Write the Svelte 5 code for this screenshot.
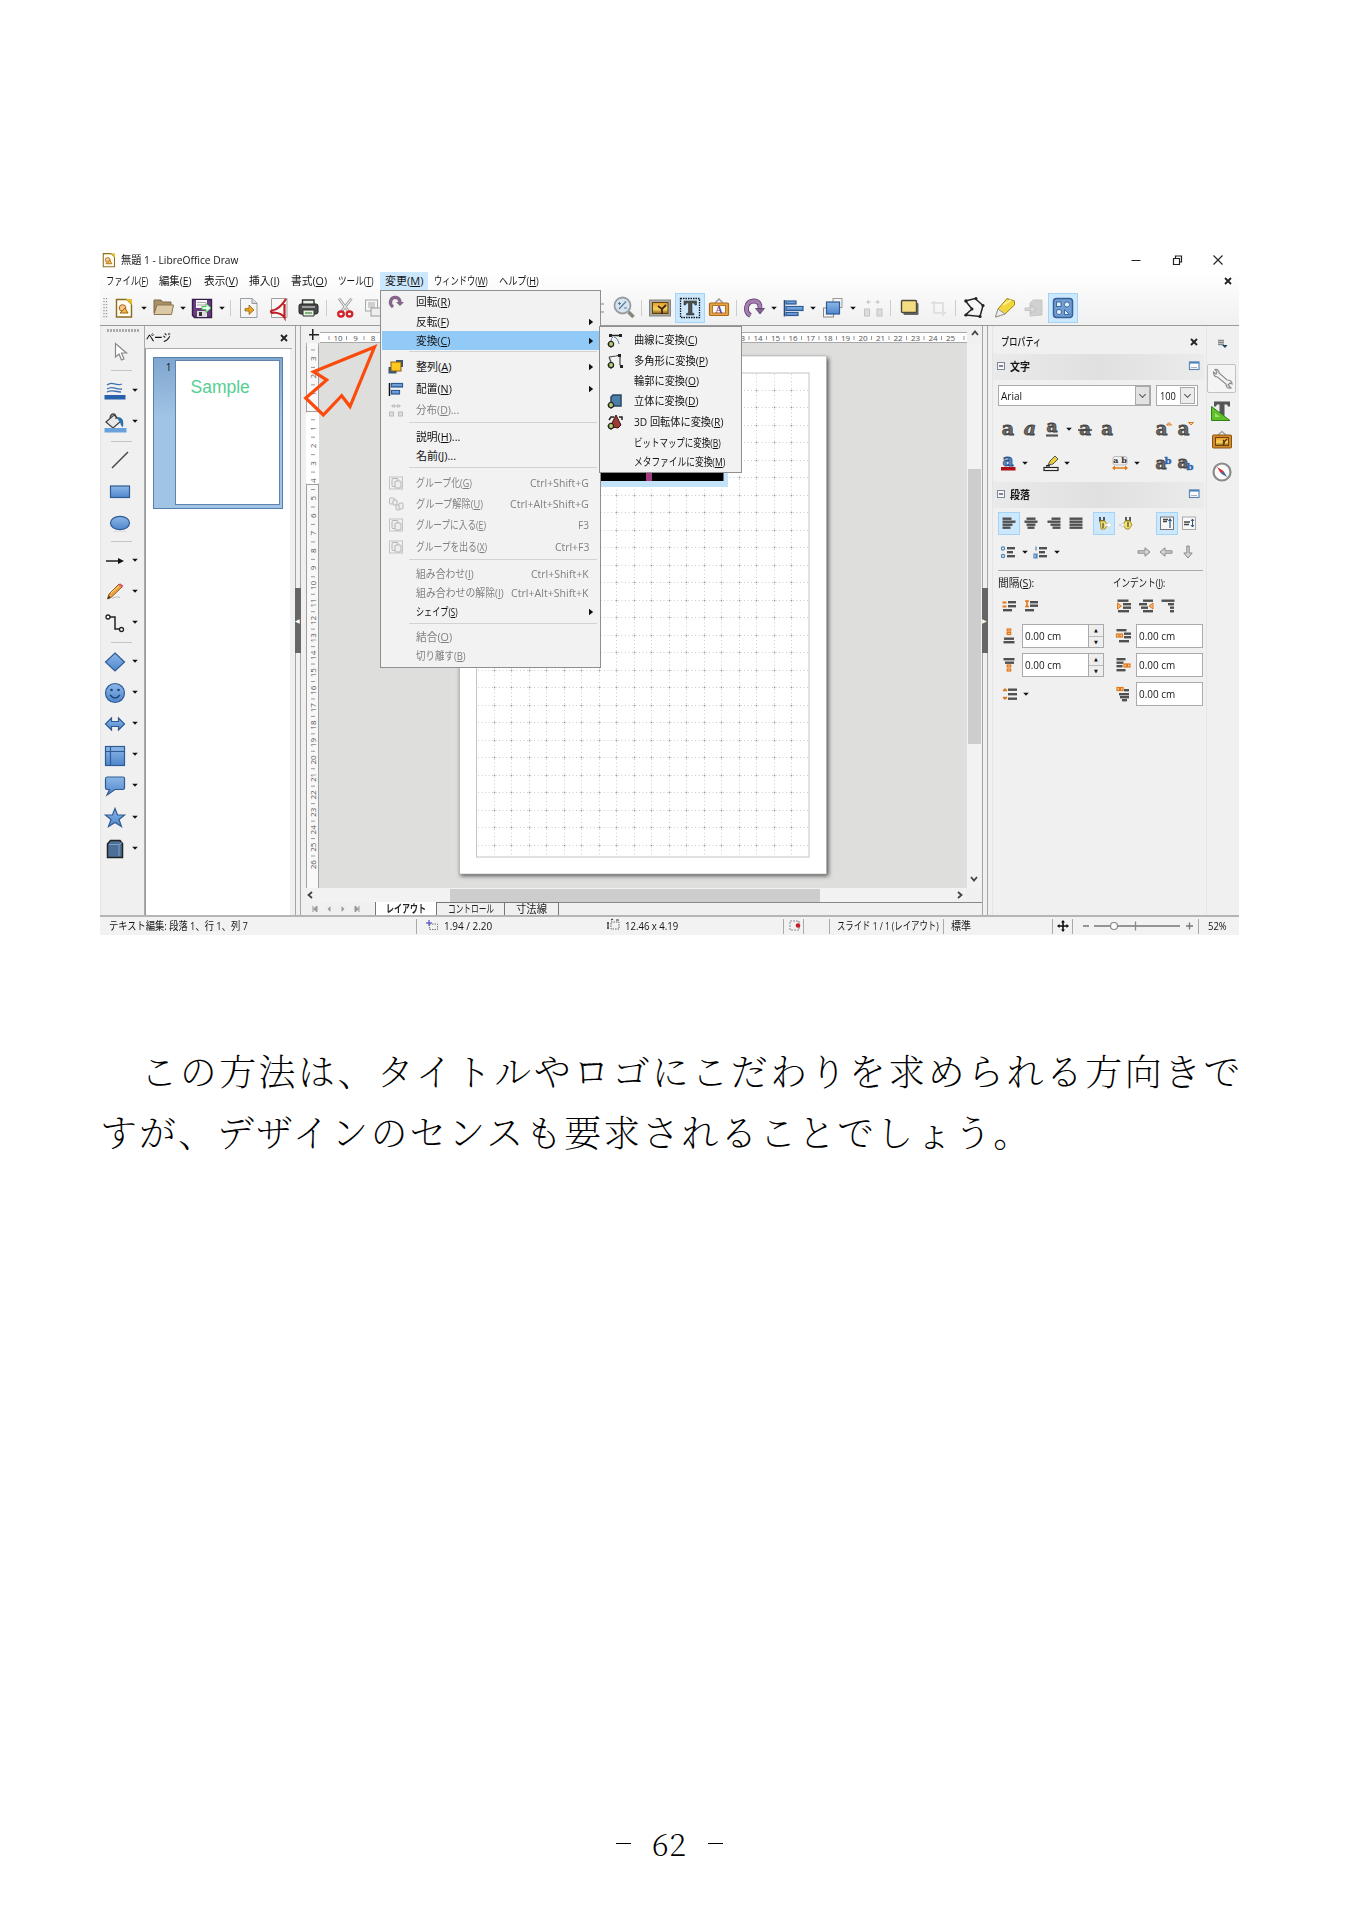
<script>
  // Turns centre positions along an axis into gaps between consecutive items.
  function flow(items, start) {
    let end = start;
    return items.map(([name, c, w, extra]) => {
      const size = w ?? (name === 'dd' ? 8 : name === 'sep' ? 2 : 16);
      const gap = c - size / 2 - end;
      end = c + size / 2;
      return { name, gap, size, extra };
    });
  }

  function fit(node, w) {
    const natural = node.offsetWidth;
    if (natural && w) node.style.transform = `scaleX(${w / natural})`;
  }

  function parts(s) {
    const m = /^(.*\()([A-Z])(\).*)$/.exec(s);
    return m ? m.slice(1) : [s, '', ''];
  }

  const B = 'fill="url(#blue)" stroke="#2f5b94" stroke-width="1.2"';
  const bars = (list, color = '#505050') =>
    list.map(([x, y, w]) => `<rect x="${x}" y="${y}" width="${w}" height="2.4" fill="${color}"/>`).join('');
  const orange = (x, y, w = 3, h = 3) =>
    `<rect x="${x}" y="${y}" width="${w}" height="${h}" fill="#fbd3a8" stroke="#e07818" stroke-width="1.2"/>`;
  const glyph = (s, extra = '', size = 19) =>
    `<text y="5.5" text-anchor="middle" font-family="DejaVu Serif, serif" font-weight="bold" font-size="${size}" fill="#6a6a6a" stroke="#3f3f3f" stroke-width=".8" ${extra}>${s}</text>`;
  const groupIcon = '<rect x="-6.5" y="-6" width="13" height="12" fill="none" stroke="#c4c4c4"/><rect x="-4" y="-4.500" width="6" height="8" rx="1" fill="#eee" stroke="#b4b4b4"/><rect x="-1" y="-2" width="6" height="7" rx="1" fill="#eee" stroke="#b4b4b4"/>';
  const node = '<circle cx="-4" cy="4" r="2.600" fill="#b7d46a" stroke="#222" stroke-width="1.200"/><path d="M-7.500 4h2M-4 6.500v1.500" stroke="#222"/>';

  const icons = {
    dd: '<path d="M-2.800-1.300h5.600L0 1.800z" fill="#111"/>',
    grip: '<path d="M0-10V10M2.500-10V10" stroke="#999" stroke-width="1.3" stroke-dasharray="1.300 1.700"/>',
    draw: '<path d="M-7.500-8.500H3l4.500 4.500V9h-15z" fill="#fffdf0" stroke="#8c6c22" stroke-width="1.4"/><path d="M2-9h6v6z" fill="#e6bd2a"/><circle cx="-1.500" cy="0" r="3.300" fill="#f6c88a" stroke="#b05c1c"/><path d="M-4 5l5-5 3 5z" fill="#f2b83a" stroke="#a4651a"/>',
    open: '<path d="M-9-8h7l1.500 2H8v11H-9z" fill="#a98f66" stroke="#7f6846"/><path d="M-6-3H10.500L8.500 6.500H-9z" fill="#dccaa6" stroke="#8d744d"/>',
    save: '<path d="M-9.500-8.500h19v18h-17l-2-2z" fill="#693c80" stroke="#351d4e" stroke-width="1.4"/><path d="M-6-8H5v8H-6z" fill="#f7f7f7"/><path d="M-5-5.500h9M-5-3h9" stroke="#aaa"/><path d="M-5 3H5v6H-5z" fill="#ddd"/><path d="M-3 4h3v4h-3z" fill="#333"/><path d="M0-1.500h4v-3L9 0 4 4.500v-3H0z" fill="#e1ffe1" stroke="#54bd62"/>',
    export: '<path d="M-8.500-9.500H3l5 4.500V9.500h-16.500z" fill="#f4f6f7" stroke="#9a9d9e"/><path d="M3-9.500v5h5" fill="#ddd" stroke="#999"/><path d="M-4 .5h4v-3.500L5 2 0 6.500V3h-4z" fill="#efa51d" stroke="#855a16" stroke-width=".7"/>',
    pdf: '<path d="M-7.500-9.500H8V9.500H-7.500z" fill="#faf7f6" stroke="#a0a0a0"/><path d="M7-9C2-1-2 2-7 2.500c-2 .5-1 3 2 2C0 5 4 7 5.500 9.500V-4" fill="none" stroke="#c21d25" stroke-width="2.200"/>',
    print: '<path d="M-5.500-8H6v6H-5.500z" fill="#e6eee6" stroke="#333" stroke-width="1.400"/><rect x="-9" y="-4" width="19" height="10" rx="2" fill="#4a4a4a" stroke="#222"/><path d="M-6-1H7" stroke="#bbb" stroke-width="1.500"/><path d="M-5 2H6v6H-5z" fill="#e4f4df" stroke="#333"/><path d="M-3 5h7" stroke="#80b277" stroke-width="2"/>',
    cut: '<path d="M-6-9.500L4 4M6.500-9.500L-4 4" stroke="#999" stroke-width="2.800"/><path d="M-6-9.500L4 4M6.500-9.500L-4 4" stroke="#eee" stroke-width="1.200"/><ellipse cx="-4" cy="6" rx="2.800" ry="2.500" fill="none" stroke="#d02329" stroke-width="2.300"/><ellipse cx="4.500" cy="6" rx="2.800" ry="2.500" fill="none" stroke="#d02329" stroke-width="2.300"/>',
    copy: '<rect x="-6.500" y="-8" width="12" height="11" fill="#f5f5f5" stroke="#a8a8a8"/><path d="M-4-5h7M-4-3h7M-4-1h7" stroke="#aaa"/><rect x="-1" y="0" width="12" height="8" fill="#eee" stroke="#999"/>',
    frag: '<path d="M-1-4h3M-1 4h3" stroke="#aaa" stroke-width="1.400"/>',
    zoom: '<circle cx="-1.500" cy="-2.500" r="8" fill="#d6e4f2" stroke="#969ca0" stroke-width="1.800"/><path d="M4.500 4l5 5" stroke="#88847e" stroke-width="3.500"/><path d="M-5 1L2-6.500M-6-4.500h3M-4.500-6v3M0 0h3" stroke="#58789a" stroke-width="1.100"/>',
    image: '<rect x="-10.500" y="-8" width="21" height="16" fill="#a9a9a0" stroke="#858585"/><rect x="-7.500" y="-5.500" width="15.500" height="11" fill="url(#gold)" stroke="#5c4419"/><path d="M2 6V1L-2-2M2 1l4-4" stroke="#412a10" stroke-width="1.800" fill="none"/>',
    textbox: '<rect x="-9.500" y="-9.500" width="19" height="19" fill="none" stroke="#111" stroke-width="1.300" stroke-dasharray="1.500 1"/><path d="M-6-7H6.500v4H5l-1-2H2V5l2 .5V7h-7.500V5.500L-1.500 5V-5h-2l-1 2H-6z" fill="#505050" stroke="#333" stroke-width=".6"/>',
    fontwork: '<path d="M-4-5l4-4 4 4" fill="none" stroke="#999" stroke-width="1.500"/><rect x="-9.500" y="-5" width="19" height="12.500" rx="1" fill="#e5a546" stroke="#ae6b19" stroke-width="1.200"/><rect x="-6.500" y="-2.500" width="13" height="7.500" fill="#fbfbfb" stroke="#b97522"/><text y="4.500" font-size="9.500" font-weight="bold" text-anchor="middle" font-family="Liberation Serif" fill="#633e8e">A</text>',
    rotate: '<path d="M-3.500 7.500C-10 4-8.500-6.500-.5-7 5-7.200 6.500-3 6 1" fill="none" stroke="#533b68" stroke-width="4.800"/><path d="M-3.500 7.500C-10 4-8.500-6.500-.5-7 5-7.200 6.500-3 6 1" fill="none" stroke="#a77cb1" stroke-width="3.300"/><path d="M1.500.5h9L6 6z" fill="#86608e" stroke="#4a325d" stroke-width=".7"/>',
    align: `<path d="M-8.500-8V8.500" stroke="#234c80" stroke-width="1.600"/><rect x="-7" y="-7" width="10" height="3" ${B}/><rect x="-7" y="-1.500" width="17" height="4" ${B}/><rect x="-7" y="4.500" width="12" height="3" ${B}/>`,
    arrange: `<rect x="0" y="-9.500" width="9" height="9" fill="#f5f5f5" stroke="#999"/><rect x="-9.500" y="0" width="10" height="9" fill="#f5f5f5" stroke="#888"/><rect x="-6.500" y="-6" width="13" height="12" ${B}/>`,
    distribute: '<path d="M-6-6h4M2-6h4" stroke="#ccc"/><path d="M-7-6l3-2.500v5zM7-6l-3-2.500v5z" fill="#ccc"/><rect x="-8.500" y="1" width="5" height="7" fill="#ddd" stroke="#c4c4c4"/><rect x="4" y="1" width="5" height="7" fill="#ddd" stroke="#c4c4c4"/>',
    shadow: '<rect x="-5.500" y="-5" width="15" height="12" rx="1" fill="#666"/><rect x="-7.500" y="-7.500" width="15" height="12" rx="1" fill="#f3dc82" stroke="#4c4a38" stroke-width="1.400"/>',
    crop: '<path d="M-7-5H5V8M-4-7V5H8" stroke="#e0e0e0" stroke-width="2" fill="none"/>',
    points: '<path d="M-8.500-7L1-9.500 9-2.500 6 8.500-8.500 7-2 1z" fill="none" stroke="#222" stroke-width="1.500"/><g fill="#222"><circle cx="-8" cy="-7" r="1.700"/><circle cx="2" cy="-9.500" r="1.500"/><circle cx="9" cy="-2.500" r="1.600"/><circle cx="6" cy="8.500" r="1.600"/><circle cx="-8" cy="7" r="1.600"/><circle cx="-2" cy="1" r="1.500"/></g>',
    glue: '<path d="M-9.500 9L-7 1 2-9.500 9.500-7v4L0 6z" fill="#f1d73c" stroke="#9b851a"/><path d="M-9.500 9L-7 1l7 5z" fill="#eee" stroke="#999"/><path d="M-2-3l8-5" stroke="#fff1a0" stroke-width="1.500"/>',
    ext: '<path d="M-5-5l3-3h9v15l-12 1z" fill="#d0d0d0" stroke="#c8c8c8"/><path d="M-10 0h6v-3l5 4.500-5 4v-3h-6z" fill="#dadada" stroke="#bbb" stroke-width=".8"/>',
    shapes: '<rect x="-9.500" y="-9.500" width="19" height="19" rx="3" fill="#6f9ed2" stroke="#365f96" stroke-width="1.500"/><g fill="#e1f0ff" stroke="#345f95" stroke-width=".9"><rect x="-6.500" y="-6" width="4.500" height="4.500"/><circle cx="4" cy="-3.500" r="2.600"/><circle cx="-4" cy="4" r="2.600"/><path d="M1.500 1.500v5h5z"/></g>',
    cursor: '<path d="M-4.500-8.500V5l3.500-3 2.500 6 2.500-1-2.500-6h5z" fill="#fff" stroke="#888" stroke-width="1.200"/>',
    linecolor: '<path d="M-8-6c6-5 8 2 15-1M-8-2c6-4 8 1 15 0M-8 1c6-3 8 0 14 0" stroke="#3e70ad" stroke-width="1.300" fill="none"/><rect x="-10.500" y="4" width="21" height="4.500" fill="#2760ad"/>',
    fillcolor: '<path d="M-9-1L-1-8l7 6-8 7z" fill="#e8eaea" stroke="#444" stroke-width="1.300"/><path d="M-5-5C-4-11 2-10 1-4" stroke="#444" fill="none" stroke-width="1.300"/><path d="M2-6c6 0 7 4 6 10-3-1-2-5-4-6z" fill="#2971ac"/><rect x="-10.500" y="5" width="22" height="4.500" fill="#69a2db"/>',
    line: '<path d="M-8 8L8-8" stroke="#444" stroke-width="1.400"/>',
    rect: `<rect x="-9.500" y="-6" width="19" height="11.500" ${B}/>`,
    ellipse: `<ellipse rx="9.500" ry="6.700" ${B}/><path d="M-7 8.500H7" stroke="#ddd"/>`,
    arrow: '<path d="M-9 0H5" stroke="#111" stroke-width="1.400"/><path d="M3-3l6 3-6 3z" fill="#111"/>',
    pencil: '<path d="M-7.500 7l1.500-5L4-8l3 3L-4 5.500z" fill="#eda33c" stroke="#9b5c1d"/><path d="M3.500-7l1.500-1.800 3.500 2.500-1.500 2z" fill="#d95b75"/><path d="M-7.500 7l1.200-3.500 2 2z" fill="#333"/><path d="M-4 1l8-7" stroke="#ffd48a"/><path d="M-3 6.500q5-3 8-1" stroke="#bbb" fill="none"/>',
    connector: '<path d="M-5-6H0V6H5" fill="none" stroke="#222" stroke-width="1.500"/><circle cx="-7" cy="-6" r="2" fill="#fff" stroke="#222" stroke-width="1.300"/><circle cx="6.500" cy="6.500" r="2" fill="#fff" stroke="#222" stroke-width="1.300"/>',
    diamond: `<path d="M0-9L9.500 0 0 9-9.500 0z" ${B}/>`,
    smile: `<circle r="9.500" ${B}/><path d="M-5 2q5 6 10 0" fill="none" stroke="#1e4474" stroke-width="1.500"/><circle cx="-3.500" cy="-3" r="1.300" fill="#1e4474"/><circle cx="3.500" cy="-3" r="1.300" fill="#1e4474"/>`,
    double: `<path d="M-9.500 0l6-6v3.500h7V-6l6 6-6 6V2.500h-7V6z" ${B}/>`,
    table: `<rect x="-9.500" y="-9.500" width="19" height="19" ${B}/><path d="M-9-4.500H9.500M-4.500-9V9.500" stroke="#2f5b94" stroke-width="1.200"/>`,
    callout: `<path d="M-8-9H8q1.500 0 1.500 1.500v9Q9.500 3.500 8 3.500H0L-8 9l2.500-5.500H-8q-1.500 0-1.500-1.500v-9Q-9.500-9-8-9z" ${B}/>`,
    star: `<path d="M0-9.500L2.500-3H9.500L4 1.500 6.500 8.500 0 4.500-6.500 8.500-4 1.500-9.500-3h7z" ${B}/>`,
    cube: '<path d="M-7.500-5l3-3.500H5l2.500 3V8.500h-15z" fill="#4b6f96" stroke="#222" stroke-width="1.500"/><path d="M-6-4.500H4V7M4-4.500l3-2" fill="none" stroke="#7fa2c4"/>',
    mrot: '<path d="M-3 5C-8 1-5-5 0-4.500 4-4 4-1 4 1" fill="none" stroke="#83658b" stroke-width="3.300"/><path d="M0 0h8L4 4z" fill="#83658b"/>',
    march: '<rect x="0" y="-7" width="7" height="7" fill="#38577d"/><rect x="-7.500" y="0" width="8" height="6.500" fill="#38577d"/><rect x="-5" y="-5" width="10" height="9" fill="#ffc722" stroke="#8b5c0d"/>',
    malign: `<path d="M-6.500-6V7" stroke="#111" stroke-width="1.500"/><rect x="-4.500" y="-5.500" width="11" height="3.500" ${B}/><rect x="-4.500" y="1.500" width="8" height="3.500" ${B}/>`,
    mdist: '<path d="M-5-4l2.500-2v4zM5-4l-2.500-2v4zM0-4l-2-2v4zM0-4l2-2v4z" fill="#bbb"/><rect x="-6.500" y="2" width="4" height="4" fill="#ddd" stroke="#bbb"/><rect x="2.500" y="2" width="4" height="4" fill="#ddd" stroke="#bbb"/>',
    group: groupIcon,
    ungroup: '<g fill="#eee" stroke="#b8b8b8"><rect x="-6.500" y="-6" width="5" height="6" rx="1"/><rect x="-3" y="-4" width="4" height="5" rx="1"/><rect x="0" y="1" width="4" height="5" rx="1"/><rect x="3" y="-1" width="4" height="6" rx="1"/></g>',
    curve: `<path d="M-6-4.500H6" stroke="#222" stroke-width="1.500"/><path d="M-6-6h3v3h-3zM4-6h3v3H4z" fill="#222"/><path d="M-1-3q4 1 5 7M-2-3q-2 1-2 4" fill="none" stroke="#5580a0"/>${node}`,
    poly: `<path d="M-6-4l7-1 4-1v10l3 2M-6-4l2 5" stroke="#444" fill="none" stroke-width="1.200"/><path d="M3-7h3v3H3zM5 4h3v3H5z" fill="#222"/>${node}`,
    solid: `<path d="M-4-4l2-2h8v11h-10z" fill="#4c7ea7" stroke="#2a4662" stroke-width="1.500"/>${node}`,
    lathe: `<path d="M1-7L6 3 3 6-2 5-3 1z" fill="#9c3c36" stroke="#411"/><path d="M-6-2l2-3h3M4-5h3v3" stroke="#222" stroke-width="1.500" fill="none"/>${node}`,
    bold: glyph('a'),
    italic: glyph('a', 'font-style="italic"'),
    under: glyph('a', 'transform="translate(0 -2.500)"', 17) + '<path d="M-6 6.500H6" stroke="#555" stroke-width="2.200"/>',
    strike: glyph('a', '', 18) + '<path d="M-7 1H7" stroke="#444" stroke-width="1.600"/>',
    ashadow: glyph('a', '', 18),
    grow: glyph('a', 'transform="translate(-2.500 0)"', 18) + '<path d="M2.500-4l2.500-2.500 2.500 2.500z" fill="#fbd3a8" stroke="#e07818"/>',
    shrink: glyph('a', 'transform="translate(-2.500 0)"', 18) + '<path d="M2.500-6.500L5-4l2.500-2.500z" fill="#fbd3a8" stroke="#e07818"/>',
    acolor: '<text y="3" text-anchor="middle" font-family="DejaVu Serif" font-weight="bold" font-size="17" fill="#5c8cca" stroke="#2a5088" stroke-width=".8">a</text><rect x="-7" y="4" width="14.500" height="3.500" fill="#b01018"/>',
    hilite: '<path d="M-3 2l2-4 5-5 3 3-5 5z" fill="#e8cf38" stroke="#555"/><path d="M-5 3l3-1 1 1z" fill="#222" stroke="#222"/><rect x="-7" y="4.500" width="14" height="3" fill="#fff" stroke="#222" stroke-width="1.200"/>',
    spacing: '<rect x="-7" y="-6.500" width="14" height="8.500" rx="2" fill="#eee" stroke="#bbb"/><text y="0" text-anchor="middle" font-family="DejaVu Serif" font-weight="bold" font-size="8" fill="#333">a b</text><path d="M-5 5H5" stroke="#e07818" stroke-width="1.500"/><path d="M-8 5l3-2.500v5zM8 5L5 2.500v5z" fill="#e07818"/>',
    sup: glyph('a', 'transform="translate(-3 0)"', 17) + '<text x="4" y="1" text-anchor="middle" font-family="DejaVu Serif" font-weight="bold" font-size="10" fill="#2f64a8" stroke="#2f64a8" stroke-width=".4">b</text>',
    sub: glyph('a', 'transform="translate(-3 -1)"', 17) + '<text x="4" y="7" text-anchor="middle" font-family="DejaVu Serif" font-weight="bold" font-size="10" fill="#2f64a8" stroke="#2f64a8" stroke-width=".4">b</text>',
    left: bars([[-6.500, -5.500, 9], [-6.500, -2.500, 13], [-6.500, .5, 10], [-6.500, 3.500, 8]]),
    center: bars([[-4.500, -5.500, 9], [-6.500, -2.500, 13], [-4.500, .5, 9], [-3.500, 3.500, 7]]),
    right: bars([[-2.500, -5.500, 9], [-6.500, -2.500, 13], [-3.500, .5, 10], [-1.500, 3.500, 8]]),
    just: bars([[-6.500, -5.500, 13], [-6.500, -2.500, 13], [-6.500, .5, 13], [-6.500, 3.500, 13]]),
    ltr: '<path d="M-4-6v4h4v-4" fill="none" stroke="#333" stroke-width="1.600"/><path d="M-4-2h5l2 4-2 4h-4z" fill="#f4e16a" stroke="#a8922c"/><path d="M1 1h3v-2l4 3-4 3V3H1z" fill="#fff" stroke="#ccc" stroke-width=".6"/><path d="M-1 0v5" stroke="#222"/>',
    rtl: '<path d="M0-6v4h4v-4" fill="none" stroke="#333" stroke-width="1.600"/><path d="M-1-2h5l2 4-3 4h-3l-3-4z" fill="#f4e16a" stroke="#a8922c"/><path d="M-2 0v4l-5-2z" fill="#fff" stroke="#bbb" stroke-width=".7"/><path d="M2-1v5" stroke="#222"/>',
    vtop: '<rect x="-6.500" y="-6" width="13" height="12.500" fill="#f8f8f8" stroke="#777"/><path d="M-4-3.500h5M-4-1.500h4" stroke="#444" stroke-width="1.300"/><path d="M3 5V-4M1.500-2L3-4l1.500 2" stroke="#2d5886" fill="none" stroke-width="1.200"/>',
    vmid: '<rect x="-6.500" y="-6" width="13" height="12.500" fill="#f8f8f8" stroke="#aaa"/><path d="M-5-1h6M-5 1.500h5" stroke="#444" stroke-width="1.300"/><path d="M3.500 4V-4M2-2l1.500-2L5-2M2 2l1.500 2L5 2" stroke="#2d5886" fill="none"/>',
    bullets: bars([[-1, -5, 8], [-1, -1, 6], [-1, 3, 8]]) + '<circle cx="-5" cy="-3.500" r="1.600" fill="none" stroke="#4b85bf" stroke-width="1.200"/><circle cx="-5" cy="4" r="1.600" fill="none" stroke="#4b85bf" stroke-width="1.200"/>',
    numbers: bars([[-1, -5, 8], [-1, -1, 6], [-1, 3, 8]]) + '<path d="M-4-5.500v4M-6 2v4h3V2zM-4 2v4" fill="none" stroke="#4b85bf" stroke-width="1.200"/>',
    gright: '<path d="M-6-1.200h7v-3l5 4.200-5 4.200v-3h-7z" fill="#d4d4d4" stroke="#888"/>',
    gleft: '<path d="M6-1.200h-7v-3L-6 0l5 4.200v-3h7z" fill="#d4d4d4" stroke="#888"/>',
    gdown: '<path d="M-1.200-6v7h-3L0 6l4.200-5h-3v-7z" fill="#d4d4d4" stroke="#888"/>',
    inc: bars([[-1, -5, 8], [-1, -1, 8], [-6, 3, 9]]) + '<path d="M-6.500-3.500h4M-6.500.5h4" stroke="#e07818" stroke-width="2"/>',
    dec: bars([[-1, -5, 8], [-1, -1.500, 8], [-6, 3, 9]]) + '<path d="M-4-5.500v6M-6-5h4M-6 .5h4" stroke="#e07818" stroke-width="1.600"/>',
    ind1: bars([[-6.500, -6.500, 11], [-1, -3, 8], [-1, .5, 8], [-6, 4, 11]]) + '<path d="M-6.500-3v6l4-3z" fill="#f5b572" stroke="#e07818"/>',
    ind2: bars([[-3, -6.500, 10], [-7, -3, 8], [-5, .5, 7], [-3, 4, 10]]) + '<path d="M7-3v6L3 0z" fill="#f5b572" stroke="#e07818"/>',
    ind3: bars([[-6.500, -6.500, 13], [0, -3, 6], [2, .5, 4], [2, 4, 4]]),
    above: bars([[-5, 1.500, 10], [-5.500, 5, 11]]) + orange(-1.800, -7, 3.500, 2) + orange(-1.800, -3.500, 3.500, 2),
    below: bars([[-5.500, -7, 11], [-4, -3.500, 9]]) + orange(-1.800, 0, 3.500, 2) + orange(-1.800, 4, 3.500, 2),
    before: bars([[-6.500, -7, 10], [1, -3.500, 7], [1, 0, 7], [-4, 4, 10]]) + orange(-6.500, -2, 2.500) + orange(-3, -2, 2.500),
    after: bars([[-6.500, -7, 9], [-6.500, -3.500, 7], [-6.500, 0, 6], [-6.500, 4, 9]]) + orange(1, -1, 2.500) + orange(4.500, -1, 2.500),
    first: bars([[1, -5, 5], [-4, -1, 10], [-3, 2, 9], [-1, 5, 5]]) + orange(-6, -6.500, 2.500) + orange(-2.500, -6.500, 2.500),
    linesp: bars([[-1, -5.500, 9], [-1, -1, 9], [-1, 3.500, 9]]) + '<path d="M-4-6l2.500 2.500h-5zM-4 6l-2.500-2.500h5z" fill="#e07818"/><path d="M-6-3.500h4M-6 3.500h4" stroke="#e07818" stroke-width="1.500"/>',
    more: '<rect x="-4.500" y="-4" width="9.500" height="7.500" fill="#fff" stroke="#5c87b8" stroke-width="1.200"/><path d="M-4-3.300H5" stroke="#4f82bf" stroke-width="1.800"/><path d="M-2.500 1.500h5" stroke="#557" stroke-dasharray="1 1"/>',
    minus: '<rect x="-3.500" y="-3.500" width="7" height="7" fill="#f8f8ff" stroke="#7a8795"/><path d="M-2 0h4" stroke="#335" stroke-width="1.200"/>',
    x: '<path d="M-3-3l6 6M3-3l-6 6" stroke="#222" stroke-width="1.800"/>',
    cfg: '<path d="M-4-3.500h6M-4-1.500h6M-4 .5h6" stroke="#888" stroke-width="1.500"/><path d="M0 1h5.500L3 4z" fill="#146"/>',
    wrench: '<path d="M-8.500-7q0 5 4 5L4 5q0 5 5 4L6 6l2-2 2 1q0-4-5-4L-3-6q0-4-4-3.500L-5-7l-1 2z" fill="#f4f4f4" stroke="#8b8b8b" stroke-width="1.200"/>',
    styles: '<path d="M-8-9.500H8v5H6l-1-2H2.500V7h-5V-6.500H-5l-1 2h-2z" fill="#555"/><path d="M-10.500-4.500V9.500H8z" fill="#61c02a" stroke="#318018"/><path d="M-7 2v4h5z" fill="#9de46c"/>',
    gallery: '<path d="M-4-5l4-3.500L4-5" fill="none" stroke="#999" stroke-width="1.300"/><rect x="-9.500" y="-5" width="19" height="13" rx="1" fill="#d28a2a" stroke="#8a5414"/><rect x="-6.500" y="-2.500" width="13" height="8" fill="url(#gold)" stroke="#71430f"/><path d="M1 5c2-2 1-4 0-5M1 3l4-4" stroke="#52310a" fill="none" stroke-width="1.300"/>',
    compass: '<circle r="8.500" fill="#fafafa" stroke="#8a8a8a" stroke-width="2.200"/><path d="M-5-5L1.500-1-1 1.500z" fill="#d32830"/><path d="M5 5L1.500-1-1 1.500z" fill="#3d659d"/>',
    pos: '<path d="M-6-3h6M-3-6v6" stroke="#3434c4" stroke-width="1"/><path d="M-2.500-2h8v5.500h-8z" fill="none" stroke="#777" stroke-dasharray="1.500 1"/>',
    size: '<path d="M-5-4v7M-6-3h2M-6 2h2M-2-6l2-1M3-6h3" stroke="#333" stroke-width="1.200"/><rect x="-2" y="-4" width="8" height="7" fill="none" stroke="#666" stroke-dasharray="1.500 1"/>',
    mod: '<rect x="-5" y="-5" width="9" height="9" fill="none" stroke="#888" stroke-dasharray="2 1"/><circle cx="3" cy="-.5" r="2.300" fill="#c41d28"/>',
    move: '<path d="M-5 0H5M0-5V5" stroke="#111" stroke-width="1.600"/><path d="M-6 0l2.500-2v4zM6 0l-2.500-2v4zM0-6l-2 2.500h4zM0 6l-2-2.500h4z" fill="#111"/>',
    min: '<path d="M-4.500 0.500h9" stroke="#222"/>',
    max: '<path d="M-3.500-1.500h6v6h-6zM-1.500-1.500v-2.500h6v6h-2" fill="none" stroke="#222" stroke-width="1.200"/>',
    close: '<path d="M-4.500-4.500l9 9M4.500-4.500l-9 9" stroke="#222" stroke-width="1.100"/>',
    up: '<path d="M-3 2l3-3.500L3 2" fill="none" stroke="#444" stroke-width="1.800"/>',
    down: '<path d="M-3-2l3 3.500L3-2" fill="none" stroke="#444" stroke-width="1.800"/>',
    prev: '<path d="M2-3l-3.500 3L2 3" fill="none" stroke="#444" stroke-width="1.800"/>',
    next: '<path d="M-2-3l3.500 3L-2 3" fill="none" stroke="#444" stroke-width="1.800"/>',
    navfirst: '<path d="M-2-3v6M2-3l-3.500 3L2 3z" fill="#999" stroke="#999"/>',
    navprev: '<path d="M1.500-3l-3 3 3 3z" fill="#999"/>',
    navnext: '<path d="M-1.500-3l3 3-3 3z" fill="#999"/>',
    navlast: '<path d="M2-3v6M-2-3l3.500 3L-2 3z" fill="#999" stroke="#999"/>',
    sub_arrow: '<path d="M-2-3.300L2.200 0-2 3.300z" fill="#111"/>',
    slider: '<path d="M-52 0h6M51 0h7M54.500-3.500v7M-41 0H45" stroke="#777" stroke-width="1.300"/><path d="M.5-4.500v9" stroke="#888" stroke-width="1.300"/><circle cx="-21" cy="0" r="3.500" fill="#fff" stroke="#888" stroke-width="1.200"/>'
  };

  const menus = flow([
    ['ファイル(F)', 126.5, 42], ['編集(E)', 175.500, 33], ['表示(V)', 220.500, 34], ['挿入(I)', 264, 31],
    ['書式(O)', 308.500, 36], ['ツール(T)', 355.500, 36], ['変更(M)', 404, 38, true], ['ウィンドウ(W)', 460.500, 54], ['ヘルプ(H)', 519, 40]
  ], 100);

  const toolbar = flow([
    ['grip', 104, 6], ['draw', 124], ['dd', 144], ['open', 163], ['dd', 183], ['save', 202], ['dd', 222], ['sep', 231],
    ['export', 249], ['pdf', 279], ['print', 308], ['sep', 326.500], ['cut', 345], ['copy', 372], ['frag', 602, 4], ['zoom', 623.500],
    ['sep', 641.500], ['image', 660], ['textbox', 689.500, 30, true], ['fontwork', 718.500], ['sep', 736.500], ['rotate', 753.500], ['dd', 774],
    ['align', 793], ['dd', 813], ['arrange', 833], ['dd', 852.500], ['distribute', 872.500], ['sep', 891], ['shadow', 908.500],
    ['crop', 938], ['sep', 956], ['points', 974], ['glue', 1004.500], ['ext', 1034.500], ['shapes', 1063, 30, true]
  ], 100);

  const tools = flow([
    ['cursor', 352], ['sep', 370.500], ['linecolor', 391, 16, true], ['fillcolor', 422.500, 16, true], ['sep', 441.500], ['line', 460],
    ['rect', 492], ['ellipse', 523], ['sep', 542], ['arrow', 561, 16, true], ['pencil', 592, 16, true], ['connector', 623, 16, true],
    ['sep', 642.500], ['diamond', 662, 16, true], ['smile', 693, 16, true], ['double', 724, 16, true], ['table', 755.500, 16, true],
    ['callout', 786, 16, true], ['star', 818, 16, true], ['cube', 849, 16, true]
  ], 332);

  const menuRows = flow([
    ['回転(R)', 302.500, 18, { w: 34, icon: 'mrot' }], ['反転(F)', 322, 18, { w: 33, sub: true }], ['変換(C)', 341, 19, { w: 34, sub: true, on: true }],
    ['sep', 352.500], ['整列(A)', 367.500, 18, { w: 35, icon: 'march', sub: true }], ['配置(N)', 389, 18, { w: 36, icon: 'malign', sub: true }],
    ['分布(D)...', 410.500, 18, { w: 43, icon: 'mdist', off: true }], ['sep', 423.500], ['説明(H)...', 437.500, 18, { w: 44 }],
    ['名前(J)...', 456.500, 18, { w: 40 }], ['sep', 468.500], ['グループ化(G)', 483, 18, { w: 56, icon: 'group', off: true, key: 'Ctrl+Shift+G', kw: 59 }],
    ['グループ解除(U)', 504.500, 18, { w: 67, icon: 'ungroup', off: true, key: 'Ctrl+Alt+Shift+G', kw: 79 }],
    ['グループに入る(E)', 525.500, 18, { w: 70, icon: 'group', off: true, key: 'F3', kw: 11 }],
    ['グループを出る(X)', 547, 18, { w: 71, icon: 'group', off: true, key: 'Ctrl+F3', kw: 34 }], ['sep', 560.500],
    ['組み合わせ(I)', 574.500, 18, { w: 58, off: true, key: 'Ctrl+Shift+K', kw: 58 }],
    ['組み合わせの解除(I)', 593, 18, { w: 88, off: true, key: 'Ctrl+Alt+Shift+K', kw: 78 }],
    ['シェイプ(S)', 612, 18, { w: 42, sub: true }], ['sep', 624], ['結合(O)', 637.500, 18, { w: 36, off: true }], ['切り離す(B)', 656, 18, { w: 50, off: true }]
  ], 291.500);

  const subRows = flow([
    ['曲線に変換(C)', 340, 18, { w: 63, icon: 'curve' }], ['多角形に変換(P)', 361, 18, { w: 74, icon: 'poly' }],
    ['輪郭に変換(O)', 381.500, 18, { w: 65 }], ['立体に変換(D)', 401, 18, { w: 64, icon: 'solid' }],
    ['3D 回転体に変換(R)', 422.500, 18, { w: 89, icon: 'lathe' }], ['ビットマップに変換(B)', 443, 18, { w: 87 }],
    ['メタファイルに変換(M)', 462, 18, { w: 91 }]
  ], 327.500);

  const P = 992;
  const charRow1 = flow([['bold', 1008], ['italic', 1030], ['under', 1052], ['dd', 1068.500], ['strike', 1085], ['ashadow', 1107], ['grow', 1164], ['shrink', 1186]], P);
  const charRow2 = flow([['acolor', 1007.500], ['dd', 1024.500], ['hilite', 1050.500], ['dd', 1067], ['spacing', 1120], ['dd', 1136.500], ['sup', 1164], ['sub', 1186]], P);
  const paraRow1 = flow([['left', 1009, 22, true], ['center', 1031], ['right', 1053.500], ['just', 1075.500], ['ltr', 1103.500, 22, true], ['rtl', 1126], ['vtop', 1166.500, 22, true], ['vmid', 1188.500]], P);
  const paraRow2 = flow([['bullets', 1008], ['dd', 1024.500], ['numbers', 1040], ['dd', 1056.500], ['gright', 1144], ['gleft', 1166], ['gdown', 1188]], P);
  const paraRow3 = flow([['inc', 1009], ['dec', 1031], ['ind1', 1123.500], ['ind2', 1146], ['ind3', 1168]], P);

  const hMarks = [-10, -9, -8, -7, 12, 13, 14, 15, 16, 17, 18, 19, 20, 21, 22, 23, 24, 25];
  const vMarks = Array.from({ length: 30 }, (_, i) => i - 3).filter((n) => n !== 0);
  const gridX = Array.from({ length: 18 }, (_, i) => 493.7 + 17.49 * i - 319).map((v) => Math.round(v) + 0.5);
  const gridY = Array.from({ length: 27 }, (_, i) => 844.7 - 17.49 * i - 343).map((v) => Math.round(v) + 0.5);
</script>

{#snippet icon(name, size = 16)}
  <svg class="icon" width={size} height="16" viewBox="{-size / 2} -8 {size} 16">{@html icons[name]}</svg>
{/snippet}

{#snippet label(text, w)}
  {@const p = parts(text)}
  <span class="label" style:width="{w}px"><span class="fit" use:fit={w}>{p[0]}<u>{p[1]}</u>{p[2]}</span></span>
{/snippet}

{#snippet strip(items)}
  {#each items as it}
    {#if it.name === 'sep'}
      <i class="vsep" style:margin-left="{it.gap}px"></i>
    {:else}
      <span class="cell" class:on={it.extra} style:margin-left="{it.gap}px" style:width="{it.size}px">{@render icon(it.name, it.size)}</span>
    {/if}
  {/each}
{/snippet}

{#snippet menuList(rows)}
  {#each rows as r}
    {#if r.name === 'sep'}
      <i class="msep" style:margin-top="{r.gap}px"></i>
    {:else}
      <div class="mrow" class:off={r.extra.off} class:hl={r.extra.on} style:margin-top="{r.gap}px" style:height="{r.size}px">
        <span class="micon">{#if r.extra.icon}{@render icon(r.extra.icon)}{/if}</span>
        {@render label(r.name, r.extra.w)}
        <span class="grow"></span>
        {#if r.extra.key}<span class="key">{@render label(r.extra.key, r.extra.kw)}</span>{/if}
        {#if r.extra.sub}<span class="marrow">{@render icon('sub_arrow', 6)}</span>{/if}
      </div>
    {/if}
  {/each}
{/snippet}

{#snippet spin()}
  <div class="field spin"><span>{@render label('0.00 cm', 36)}</span><b><i>▲</i><i>▼</i></b></div>
{/snippet}

<svg class="defs" width="0" height="0">
  <defs>
    <linearGradient id="blue" x1="0" y1="0" x2="0" y2="1"><stop offset="0" stop-color="#8db8e8" /><stop offset="1" stop-color="#4f86cc" /></linearGradient>
    <linearGradient id="gold" x1="0" y1="0" x2="0" y2="1"><stop offset="0" stop-color="#e89a2c" /><stop offset=".6" stop-color="#f8d35c" /><stop offset="1" stop-color="#8c6018" /></linearGradient>
  </defs>
</svg>

<main>
  <section class="window">
    <header class="title">
      <span class="app">{@render icon('draw', 14)}</span>
      {@render label('無題 1 - LibreOffice Draw', 117)}
      <span class="grow"></span>
      <span class="winbtn">{@render icon('min')}</span>
      <span class="winbtn">{@render icon('max')}</span>
      <span class="winbtn">{@render icon('close')}</span>
    </header>

    <nav class="menubar">
      {#each menus as m}
        <span class="menu" class:open={m.extra} style:margin-left="{m.gap}px">{@render label(m.name, m.size)}</span>
      {/each}
      <span class="grow"></span>
      <span class="docclose">{@render icon('x')}</span>
    </nav>

    <div class="toolbar">{@render strip(toolbar)}</div>

    <div class="body">
      <aside class="tools">
        <i class="toolgrip"></i>
        {#each tools as t}
          {#if t.name === 'sep'}
            <i class="hsep" style:margin-top="{t.gap}px"></i>
          {:else}
            <div class="tool" class:plain={!t.extra} style:margin-top="{t.gap}px">
              {@render icon(t.name)}
              {#if t.extra}<span class="tdd">{@render icon('dd', 8)}</span>{/if}
            </div>
          {/if}
        {/each}
      </aside>

      <aside class="pages">
        <div class="phead">{@render label('ページ', 25)}<span class="grow"></span>{@render icon('x')}</div>
        <div class="plist">
          <div class="thumb"><span class="num">1</span><div class="mini">Sample</div></div>
        </div>
      </aside>
      <div class="splitter left"><b>◀</b></div>

      <section class="work">
        <div class="hrow">
          <span class="corner"></span>
          <svg width="647" height="11" class="ruler">
            <path d="M0 .5H647M0 10.500H647" stroke="#a8a8a8" />
            {#each hMarks as n}
              <text x={513 + n * 17.5 - 320} y="9">{Math.abs(n)}</text>
              <path d="M{513 + n * 17.5 - 320 - 9} 4v4" stroke="#999" />
            {/each}
            <path d="M644 4v4" stroke="#999" />
          </svg>
          <span class="scup">{@render icon('up')}</span>
        </div>
        <div class="mid">
          <svg width="13" height="545" class="ruler vr">
            <path d="M.5 0V545M12.500 0V545" stroke="#b0b0b0" stroke-dasharray="3 1" />
            <path d="M0 69.500h13v71H0z" fill="#fff" stroke="none" />
            <path d="M0 68.500H13M0 141.500H13M.5 141.500V545M12.500 141.500V545M.5 3V68M12.500 3V68" stroke="#a0a0a0" />
            {#each vMarks as n}
              {#if n < 27}<text transform="translate(9.500 {411 + n * 17.45 - 343}) rotate(-90)">{Math.abs(n)}</text>{/if}
              <path d="M5 {411 + n * 17.45 - 343 - 8.7}h4" stroke="#999" />
            {/each}
          </svg>
          <svg class="canvas" width="648" height="545">
            <defs><filter id="soft" x="-10%" y="-10%" width="120%" height="120%"><feGaussianBlur stdDeviation="2" /></filter></defs>
            <rect x="141.500" y="15" width="368" height="518" fill="#555" filter="url(#soft)" />
            <rect x="140.500" y="13" width="367" height="518" fill="#fff" stroke="#aaa" stroke-width=".6" />
            {#each gridX as x}<path d="M{x} 31V513" stroke="#cdcdcd" stroke-dasharray="1 2.500" />{/each}
            {#each gridY as y}
              <path d="M159 {y}H490" stroke="#cdcdcd" stroke-dasharray="1 2.500" />
              {#each gridX as x}<rect x={x - 0.7} y={y - 0.7} width="1.400" height="1.400" fill="#999" />{/each}
            {/each}
            <rect x="157.500" y="30" width="332.500" height="484" fill="none" stroke="#c4c4c4" />
            <rect x="270" y="120" width="139" height="24" fill="#c3e3fa" />
            <rect x="270" y="120" width="134.500" height="18" fill="#000" />
            <rect x="327" y="129" width="6" height="9" fill="#a33c7e" />
          </svg>
          <div class="vscroll"><i></i>{@render icon('down')}</div>
        </div>
        <div class="hscroll">{@render icon('prev', 8)}<i></i>{@render icon('next', 8)}</div>
        <div class="tabs">
          <span class="nav">{@render icon('navfirst', 6)}{@render icon('navprev', 6)}{@render icon('navnext', 6)}{@render icon('navlast', 6)}</span>
          <span class="tab cur">{@render label('レイアウト', 40)}</span>
          <span class="tab two">{@render label('コントロール', 46)}</span>
          <span class="tab three">{@render label('寸法線', 31)}</span>
          <span class="rest"></span>
        </div>
      </section>
      <div class="splitter right"><b>▶</b></div>

      <aside class="props">
        <div class="prhead">{@render label('プロパティ', 40)}<span class="grow"></span>{@render icon('x')}</div>
        <div class="sec">{@render icon('minus', 8)}<strong>{@render label('文字', 20)}</strong><span class="grow"></span>{@render icon('more', 10)}</div>
        <div class="combos">
          <div class="combo wide">{@render label('Arial', 21)}<b><em></em></b></div>
          <div class="combo">{@render label('100', 16)}<b><em></em></b></div>
        </div>
        <div class="prow r1">{@render strip(charRow1)}</div>
        <div class="prow r2">{@render strip(charRow2)}</div>
        <div class="sec">{@render icon('minus', 8)}<strong>{@render label('段落', 20)}</strong><span class="grow"></span>{@render icon('more', 10)}</div>
        <div class="prow r3">{@render strip(paraRow1)}</div>
        <div class="prow r4">{@render strip(paraRow2)}</div>
        <div class="heads"><span>{@render label('間隔(S):', 36)}</span><span>{@render label('インデント(I):', 52)}</span></div>
        <div class="prow r5">{@render strip(paraRow3)}</div>
        <div class="fields">
          {@render icon('above')}{@render spin()}<span class="fi">{@render icon('before')}</span><div class="field">{@render label('0.00 cm', 36)}</div>
          {@render icon('below')}{@render spin()}<span class="fi">{@render icon('after')}</span><div class="field">{@render label('0.00 cm', 36)}</div>
          {@render icon('linesp')}{@render icon('dd', 8)}<span class="fi">{@render icon('first')}</span><div class="field">{@render label('0.00 cm', 36)}</div>
        </div>
      </aside>

      <aside class="deck">
        <span class="dk cfg">{@render icon('cfg')}</span>
        <span class="dk sel">{@render icon('wrench')}</span>
        <span class="dk up">{@render icon('styles')}</span>
        <span class="dk up">{@render icon('gallery')}</span>
        <span class="dk last">{@render icon('compass')}</span>
      </aside>
    </div>

    <footer class="status">
      <span class="s1">{@render label('テキスト編集: 段落 1、行 1、列 7', 139)}</span>
      <span class="s2">{@render icon('pos')}{@render label('1.94 / 2.20', 48)}</span>
      <span class="s3">{@render icon('size')}{@render label('12.46 x 4.19', 53)}</span>
      <span class="s4">{@render icon('mod')}</span>
      <span class="s5"></span>
      <span class="s6">{@render label('スライド 1 / 1 (レイアウト)', 102)}</span>
      <span class="s7">{@render label('標準', 20)}</span>
      <span class="s8">{@render icon('move')}</span>
      <span class="s9">{@render icon('slider', 110)}</span>
      <span class="s10">{@render label('52%', 19)}</span>
    </footer>

    <div class="popup main">{@render menuList(menuRows)}</div>
    <div class="popup sub">{@render menuList(subRows)}</div>
    <svg class="pointer" width="76" height="76" viewBox="303 343 76 76">
      <path d="M374.500 347L313.500 371.700 326.700 380 305.700 398 323.300 415 341.700 395.700 350 406.500z" fill="none" stroke="#fb4a0b" stroke-width="3.200" />
    </svg>
  </section>

  <p class="prose"><span class="first">　この方法は、タイトルやロゴにこだわりを求められる方向きで</span><span>すが、デザインのセンスも要求されることでしょう。</span></p>
  <div class="folio"><i></i><span>62</span><i></i></div>
</main>

<style>
  :global(body) { background: #fff; }
  main { width: 1349px; height: 1915px; box-sizing: border-box; padding: 245px 0 0 100px; overflow: hidden; }
  .defs { position: absolute; }
  .window { position: relative; width: 1139px; height: 690px; display: flex; flex-direction: column; font: 11px/16px "Open Sans", "Noto Sans CJK JP", sans-serif; color: #151515; background: linear-gradient(#fff 0, #fff 28px, #f0f0f0 80px); }
  .icon { display: block; flex: none; overflow: visible; }
  .label { display: inline-block; white-space: nowrap; flex: none; height: 16px; line-height: 16px; }
  .fit { display: inline-block; width: max-content; transform-origin: 0 50%; line-height: 16px; height: 16px; }
  u { text-underline-offset: 1px; text-decoration-thickness: 1px; }
  .grow { flex: 1; }

  .title { height: 27px; display: flex; align-items: center; padding: 3px 13px 0 2px; box-sizing: border-box; }
  .app { width: 13px; margin: 0 6px 0 0; transform: scale(.75); }
  .winbtn { margin-left: 25px; }
  .menubar { height: 19px; display: flex; align-items: stretch; }
  .menu { display: flex; align-items: center; padding-bottom: 1px; }
  .menu.open { background: #cce8ff; box-shadow: -5px 0 #cce8ff, 5px 0 #cce8ff; }
  .docclose { margin: 1px 3px 0 0; }
  .toolbar { height: 34px; display: flex; align-items: center; border-bottom: 1px solid #9a9a9a; }
  .cell { display: flex; align-items: center; justify-content: center; flex: none; height: 30px; box-sizing: border-box; }
  .cell.on { background: #cce8ff; box-shadow: inset 0 0 0 1px #a5d3f5; }
  .vsep { width: 2px; height: 16px; flex: none; border-left: 1px solid #ccc; box-sizing: border-box; }

  .body { height: 590px; display: flex; }
  .tools { width: 44px; background: #f0f0f0; border-left: 1px solid #e4e4e4; box-sizing: border-box; flex: none; }
  .toolgrip { display: block; height: 3px; margin: 3px 4px 3px 6px; background: repeating-linear-gradient(90deg, #aaa 0 2px, transparent 2px 3px); }
  .tool { display: flex; align-items: center; height: 16px; padding-left: 6px; }
  .tool.plain { padding-left: 11px; }
  .tdd { margin: -3px 0 0 8px; }
  .hsep { display: block; width: 21px; height: 2px; border-top: 1px solid #c4c4c4; box-sizing: border-box; margin-left: 10px; }

  .pages { width: 151px; flex: none; display: flex; flex-direction: column; background: #f0f0f0; border-left: 1px solid #aaa; box-sizing: border-box; border-bottom: 1px solid #aaa; }
  .phead { height: 23px; display: flex; align-items: center; padding: 1px 0 0 1px; border-bottom: 1px solid #aaa; box-sizing: border-box; color: #111; width: 147px; font-weight: 500; }
  .plist { flex: 1; background: #fff; width: 145px; padding: 8px 0 0 7px; box-sizing: border-box; border-left: 1px solid #999; }
  .thumb { display: flex; width: 130px; height: 152px; box-sizing: border-box; border: 1.5px solid #557fac; background: linear-gradient(#7fa6cf, #a0c4e4 40%); padding: 3px 3px 0 0; }
  .num { width: 21.5px; text-align: right; padding-right: 4px; box-sizing: border-box; line-height: 12px; font-size: 10px; flex: none; }
  .mini { flex: 1; height: 143px; background: #fff; box-shadow: 0 0 0 1px #5f83ad; font: 17.5px/52px "Liberation Sans", sans-serif; color: #55cf91; padding-left: 15px; }
  .splitter { width: 6px; flex: none; background: #f0f0f0; border: solid #a4a4a4; border-width: 0 1px; box-sizing: border-box; padding-top: 262px; }
  .splitter b { display: flex; align-items: center; width: 6px; height: 65px; margin-left: -1px; background: #666; color: #fff; font: 6px/65px "DejaVu Sans", sans-serif; }

  .work { width: 681px; flex: none; background: #f0f0f0; padding-left: 5px; box-sizing: border-box; }
  .hrow { height: 17px; display: flex; align-items: flex-end; }
  .corner { width: 11px; height: 11px; align-self: flex-start; margin: 3px 0 0 2px; flex: none; background: linear-gradient(#222, #222) 50% 5px / 10px 1.5px no-repeat, linear-gradient(#222, #222) 4px 0 / 1.5px 11px no-repeat; }
  .ruler { background: #fdfdfd; display: block; flex: none; margin-left: 1px; }
  .ruler text { font: 8px "Open Sans", sans-serif; fill: #555; text-anchor: middle; }
  .ruler.vr { margin: 0; background: #f8f8f8; }
  .scup { margin: 0 0 2px 1px; width: 14px; flex: none; display: flex; justify-content: center; }
  .mid { display: flex; height: 545px; }
  .canvas { background: #dededd; display: block; flex: none; }
  .vscroll { width: 14px; background: #f2f2f2; display: flex; flex-direction: column; align-items: center; }
  .vscroll i { width: 13px; height: 275px; background: #cdcdcd; margin: 126px 0 127px; flex: none; }
  .hscroll { height: 14px; display: flex; align-items: center; background: #f2f2f2; width: 660px; }
  .hscroll i { width: 370px; height: 13px; background: #cdcdcd; margin: 0 136px 0 136px; flex: none; }
  .tabs { display: flex; height: 14px; line-height: 14px; color: #222; }
  .nav { display: flex; gap: 8px; padding-left: 6px; width: 69px; box-sizing: border-box; flex: none; margin-top: -1px; }
  .tab { box-sizing: border-box; border: 1px solid #777; border-left: 0; height: 14px; display: flex; align-items: center; justify-content: center; flex: none; }
  .cur { width: 62px; background: #fff; border-top: 0; border-left: 1px solid #777; font-weight: 600; }
  .two { width: 68px; }
  .three { width: 54px; }
  .rest { flex: 1; border-top: 1px solid #888; }

  .props { width: 216px; margin-left: 4px; flex: none; background: #f0f0f0; border-left: 1px solid #e4e4e4; box-sizing: border-box; }
  .prhead { height: 28px; padding: 4px 2px 0 8px; display: flex; align-items: center; box-sizing: border-box; width: 211px; font-weight: 500; }
  .prhead .icon { margin: 0; }
  .sec { height: 26px; width: 211px; background: linear-gradient(90deg, #eaeaea, #e0e0e0 50%, #ebebeb); display: flex; align-items: center; padding: 0 5px 2px 4px; box-sizing: border-box; }
  .sec strong { margin: 2px 0 0 5px; font-weight: 700; height: 16px; }
  .combos { display: flex; gap: 5px; padding: 5px 0 0 5px; }
  .combo { width: 42px; height: 21px; background: #fff; border: 1px solid #aaa; box-sizing: border-box; display: flex; align-items: center; justify-content: space-between; padding: 0 2px 0 3px; }
  .combo.wide { width: 153px; padding: 0 0 0 2px; }
  .combo b { width: 15px; height: 17px; background: #ececec; border: 1px solid #aaa; box-sizing: border-box; display: flex; align-items: center; justify-content: center; }
  .combo.wide b { height: 19px; background: #e2e2e2; }
  .combo em { width: 4px; height: 4px; border: solid #555; border-width: 0 1.3px 1.3px 0; transform: translateY(-1px) rotate(45deg); }
  .prow { display: flex; align-items: center; height: 24px; margin-left: -1px; }
  .prow .cell { height: 23px; }
  .r1 { margin-top: 11px; }
  .r2 { margin: 10px 0 7px -1px; }
  .r3 { margin-top: 3px; }
  .r4 { margin-top: 5px; }
  .heads { display: flex; border-top: 1px solid #aaa; margin: 6px 5px 0 5px; padding-top: 4px; }
  .heads > span { width: 115px; flex: none; height: 16px; }
  .r5 { margin-top: 3px; }
  .fields { display: grid; grid-template-columns: 14px 82px 18px 67px; column-gap: 7px; row-gap: 5px; align-items: center; margin: 6px 0 0 8px; }
  .fi { padding-left: 4px; }
  .field { height: 24px; background: #fff; border: 1px solid #aaa; box-sizing: border-box; display: flex; align-items: center; padding-left: 2px; justify-content: space-between; }
  .spin b { width: 14px; height: 22px; display: flex; flex-direction: column; border-left: 1px solid #aaa; background: #eee; }
  .spin i { font: 5px/11px "DejaVu Sans", sans-serif; text-align: center; height: 11px; box-sizing: border-box; }
  .spin i + i { border-top: 1px solid #bbb; }
  .deck { flex: 1; background: #f0f0f0; border-left: 1px solid #e6e6e6; padding-top: 4px; box-sizing: border-box; display: flex; flex-direction: column; align-items: flex-start; margin-left: -2px; }
  .dk { width: 29px; height: 29px; display: flex; align-items: center; justify-content: center; }
  .dk.cfg { height: 28px; }
  .dk.sel { border: 1px solid #c2c2c2; border-radius: 2px; box-sizing: border-box; margin: 6px 0 3px; background: #f4f4f4; }
  .dk.last { margin-top: 3px; }

  .status { height: 20px; background: #f2f2f2; border-top: 2px solid #b5b5b5; box-sizing: border-box; display: flex; align-items: center; margin-top: -1px; flex: none; }
  .status > span { display: flex; align-items: center; height: 15px; box-sizing: border-box; flex: none; border-left: 1px solid #aaa; }
  .status .s1 { width: 316px; padding-left: 9px; border: 0; }
  .status .s2 { width: 184px; padding-left: 7px; gap: 4px; }
  .status .s3 { width: 183px; padding-left: 5px; gap: 4px; border: 0; }
  .status .s4 { width: 20px; padding-left: 3px; }
  .status .s5 { width: 26px; }
  .status .s6 { width: 114px; padding-left: 7px; }
  .status .s7 { width: 109px; padding-left: 7px; }
  .status .s8 { width: 20px; padding-left: 2px; }
  .status .s9 { width: 126px; padding-left: 7px; }
  .status .s10 { padding-left: 9px; }

  .popup { position: absolute; background: #f2f2f2; border: 1px solid #8f8f8f; box-sizing: border-box; color: #111; }
  .main.popup { left: 280px; top: 45px; width: 221px; height: 378px; }
  .sub.popup { left: 499px; top: 81px; width: 143px; height: 147px; }
  .mrow { display: flex; align-items: center; margin: 0 1px; }
  .mrow.hl { background: #91c9f7; }
  .mrow.off { color: #808080; }
  .micon { width: 16px; margin: 0 11px 0 6px; flex: none; }
  .main .micon { margin-right: 12px; }
  .key { margin-right: 10px; }
  .marrow { margin-right: 5px; }
  .msep { display: block; height: 2px; border-top: 1px solid #d2d2d2; box-sizing: border-box; margin: 0 3px 0 28px; }
  .pointer { position: absolute; left: 203px; top: 98px; overflow: visible; }

  .prose { margin: 105px 0 0; font: 200 37px/61px "Noto Serif CJK JP", "Noto Sans CJK JP", serif; color: #000; }
  .prose span { display: block; white-space: nowrap; letter-spacing: 2px; }
  .prose .first { letter-spacing: 2.4px; padding-left: 1px; }
  .folio { display: flex; align-items: center; width: 1139px; justify-content: center; gap: 21px; margin-top: 661px; font: 200 31px/40px "Noto Serif CJK JP", "Liberation Serif", serif; letter-spacing: 1px; color: #000; }
  .folio i { width: 15px; height: 1px; background: #000; }
</style>
